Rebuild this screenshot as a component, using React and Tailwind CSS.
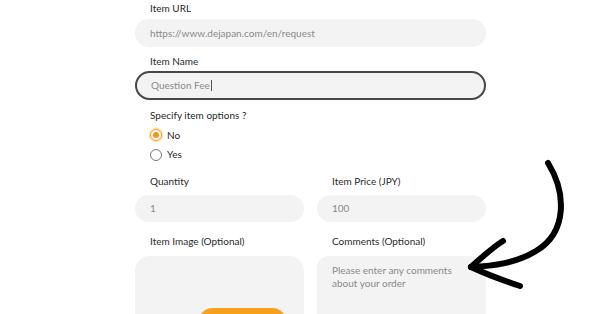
export default function App() {
  const font = { fontFamily: '"Lato", "Liberation Sans", sans-serif' };
  return (
    <div className="relative w-[600px] h-[314px] overflow-hidden bg-white" style={font}>
      <div className="ml-[135px] w-[351px] flex flex-col">
        <div className="h-[19px] pl-[15px] pt-[1px] text-[10px] leading-[14px] text-[#2a2a2a]">Item URL</div>
        <div className="h-[28px] rounded-full bg-[#f3f3f3] flex items-center pl-[15px] text-[10px] text-[#8a8a8a]">https://www.dejapan.com/en/request</div>
        <div className="h-[24px] pl-[15px] pt-[7px] text-[10px] leading-[14px] text-[#2a2a2a]">Item Name</div>
        <div className="h-[29px] rounded-full bg-[#f3f3f3] border-2 border-[#484848] flex items-center pl-[14px] text-[10px] text-[#8a8a8a]">
          Question Fee<span className="inline-block w-px h-[11px] bg-[#555] ml-px" />
        </div>
        <div className="h-[25px] pl-[15px] pt-[8px] text-[10px] leading-[14px] text-[#2a2a2a]">Specify item options ?</div>
        <div className="flex items-center h-[20px] pl-[15px] text-[10px] text-[#2a2a2a]">
          <span className="w-[12px] h-[12px] rounded-full border border-[#f7a01b] bg-white flex items-center justify-center mr-[5px] shadow-[0_0_0_1.5px_rgba(247,160,27,0.25)]">
            <span className="w-[6px] h-[6px] rounded-full bg-[#f7941d]" />
          </span>
          No
        </div>
        <div className="flex items-center h-[19px] pl-[15px] text-[10px] text-[#2a2a2a]">
          <span className="w-[12px] h-[12px] rounded-full border border-[#777] bg-white mr-[5px]" />
          Yes
        </div>
        <div className="grid grid-cols-2 gap-x-[13px]">
          <div className="flex flex-col">
            <div className="h-[31px] pl-[15px] pt-[10px] text-[10px] leading-[14px] text-[#2a2a2a]">Quantity</div>
            <div className="h-[27px] rounded-full bg-[#f3f3f3] flex items-center pl-[15px] text-[10px] text-[#8a8a8a]">1</div>
            <div className="h-[34px] pl-[15px] pt-[12px] text-[10px] leading-[14px] text-[#2a2a2a]">Item Image (Optional)</div>
            <div className="h-[80px] rounded-[15px] bg-[#f3f3f3] flex justify-start pl-[63px] pt-[52px]">
              <div className="w-[89px] h-[30px] rounded-full bg-[#f7a01b]" />
            </div>
          </div>
          <div className="flex flex-col">
            <div className="h-[31px] pl-[15px] pt-[10px] text-[10px] leading-[14px] text-[#2a2a2a]">Item Price (JPY)</div>
            <div className="h-[27px] rounded-full bg-[#f3f3f3] flex items-center pl-[15px] text-[10px] text-[#8a8a8a]">100</div>
            <div className="h-[34px] pl-[15px] pt-[12px] text-[10px] leading-[14px] text-[#2a2a2a]">Comments (Optional)</div>
            <div className="h-[80px] rounded-[12px] bg-[#f3f3f3] pl-[15px] pt-[8px] text-[10px] leading-[13px] text-[#8a8a8a]">
              Please enter any comments<br />about your order
            </div>
          </div>
        </div>
      </div>
      <svg className="absolute left-0 top-0" width="600" height="314" viewBox="0 0 600 314" fill="none">
        <path d="M548 163 C 566 192 568 232 536 251 C 516 263 494 266 471 267" stroke="#000" strokeWidth="6" strokeLinecap="round" />
        <path d="M471 267 C 482 257 493 247 503 241" stroke="#000" strokeWidth="6" strokeLinecap="round" />
        <path d="M471 267 C 488 275 505 281 520 286" stroke="#000" strokeWidth="6" strokeLinecap="round" />
      </svg>
    </div>
  );
}
